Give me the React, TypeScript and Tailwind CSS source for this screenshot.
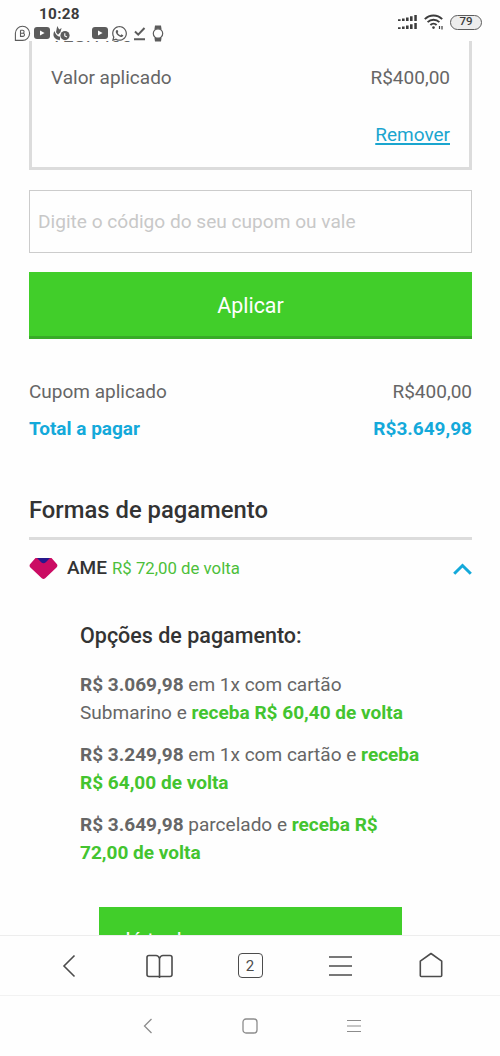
import { ReactNode } from "react";
import { FaWhatsapp } from "react-icons/fa";

const opcoes = [
  { valor: "R$ 3.069,98", texto: "em 1x com cartão Submarino e", volta: "receba R$ 60,40 de volta" },
  { valor: "R$ 3.249,98", texto: "em 1x com cartão e", volta: "receba R$ 64,00 de volta" },
  { valor: "R$ 3.649,98", texto: "parcelado e", volta: "receba R$ 72,00 de volta" },
];

function YoutubeIcon() {
  return (
    <svg width="16" height="12" viewBox="0 0 16 12" className="shrink-0">
      <rect width="16" height="12" rx="3" fill="#5c5c5c" />
      <path d="M6 3.4v5.2L10.6 6z" fill="#fff" />
    </svg>
  );
}

function StatusBar() {
  return (
    <header className="flex h-[41px] shrink-0 justify-between text-[#3c3c3c]">
      <div className="pl-[14px]">
        <p className="pt-[6px] pl-[25px] text-[15.3px] leading-[17px] font-bold tracking-[0.3px]">10:28</p>
        <div className="flex h-[20px] items-center text-[#5c5c5c]">
          <svg width="17" height="17" viewBox="0 0 17 17" fill="none" stroke="currentColor" className="shrink-0">
            <path d="M1.400 15.400V8.300a7.100 7.100 0 1 1 7.100 7.100z" strokeWidth="1.100" />
            <path d="M6.500 5.200v6.200h2.400a1.600 1.600 0 0 0 0-3.200H6.500M6.500 8.200h2.100a1.500 1.500 0 0 0 0-3H6.500" strokeWidth="1.100" />
          </svg>
          <div className="ml-[3px]"><YoutubeIcon /></div>
          <svg width="17" height="15" viewBox="0 0 17 15" fill="currentColor" className="ml-[3px] shrink-0">
            <path d="M4.200 0 6.200 3.400 8.600 2 7.400 6.200 5 8.800 3 6.200z" />
            <path d="M1.400 5C-.8 9.200.6 13.400 6.800 14.200l.4-3.400C4.200 10.400 2.600 8.600 1.400 5z" />
            <circle cx="12" cy="9.600" r="4.600" />
            <path d="M11.800 7.200v2.800l2.200 1" fill="none" stroke="#fff" strokeWidth="1.100" />
          </svg>
          <div className="ml-[22px]"><YoutubeIcon /></div>
          <FaWhatsapp className="ml-[3px] shrink-0" size={17} />
          <svg width="13" height="15" viewBox="0 0 13 15" fill="none" stroke="currentColor" strokeWidth="2" className="ml-[5px] shrink-0">
            <path d="M2 5.500 5.200 8.600 11.500 2M1 13.200h11" />
          </svg>
          <svg width="12" height="17" viewBox="0 0 12 17" className="ml-[6px] shrink-0">
            <path d="M3 .5h6l.6 4H2.400zM2.400 12.500h7.200l-.6 4H3z" fill="currentColor" />
            <circle cx="6" cy="8.500" r="4.700" fill="#fff" stroke="currentColor" strokeWidth="1.200" />
          </svg>
        </div>
      </div>
      <div className="flex h-[44px] items-center pr-[18px]">
        <svg width="20" height="16" viewBox="0 0 20 16" fill="#3c3c3c">
          <path d="M0 5.200h2.600V7H0zM4 4.600h2.600V7H4zM8 3.600h2.600V7H8zM12 2.200h2.600V7H12zM16.300 1h2.500v6h-2.500z" />
          <path d="M0 13.200h2.600V15H0zM4 12.600h2.600V15H4zM8 11.600h2.600V15H8zM12 10.200h2.600V15H12zM16.300 9h2.500v6h-2.500z" />
        </svg>
        <svg width="20" height="16" viewBox="0 0 20 16" fill="none" stroke="#3c3c3c" strokeWidth="1.900" className="ml-[6px]">
          <path d="M.8 5.200a12.200 12.200 0 0 1 17.400 0M3.600 8.200a8.300 8.300 0 0 1 11.800 0M6.400 11a4.400 4.400 0 0 1 6.200 0" />
          <circle cx="9.500" cy="13.600" r="1.300" fill="#3c3c3c" stroke="none" />
          <path d="M15.500 12v3M18 12v3.500" strokeWidth="1.200" />
        </svg>
        <span className="ml-[6px] flex h-[15px] w-[32px] items-center justify-center rounded-full border-[1.5px] border-[#5c5c5c] bg-[#ededed] text-[11.5px] leading-none font-medium">79</span>
      </div>
    </header>
  );
}

function Linha({ label, valor, className }: { label: string; valor: string; className?: string }) {
  return (
    <div className={`flex items-center justify-between ${className ?? ""}`}>
      <span>{label}</span>
      <span>{valor}</span>
    </div>
  );
}

function NavButton({ label, children }: { label: string; children: ReactNode }) {
  return (
    <button aria-label={label} className="flex flex-1 items-center justify-center">
      {children}
    </button>
  );
}

export default function App() {
  return (
    <div className="flex h-[1056px] w-[500px] flex-col overflow-hidden bg-[#fefefe] font-[Roboto,sans-serif] text-[19px] text-[#666]">
      <StatusBar />

      <main className="h-[894px] shrink-0 overflow-hidden px-[29px]">
        {/* Cupom atual */}
        <section className="h-[129px] w-[443px] border-x-[3px] border-b-[3px] border-[#dcdcdc] px-[19px]">
          <div className="flex h-[3px] items-end overflow-hidden">
            <p className="mb-[-3px] leading-[22px] tracking-[0.4px]">YESH400</p>
          </div>
          <Linha label="Valor aplicado" valor="R$400,00" className="h-[68px]" />
          <div className="flex h-[46px] items-center justify-end">
            <a href="#" className="text-[#1aa5cf] underline decoration-[1.5px] underline-offset-[2px]">Remover</a>
          </div>
        </section>

        <input
          placeholder="Digite o código do seu cupom ou vale"
          className="mt-[20px] block h-[63px] w-[443px] border-[1.5px] border-[#ccc] pl-[8px] text-[19.1px] placeholder:text-[#c8c8c8]"
        />
        <button className="mt-[19px] block h-[67px] w-[443px] border-b-[3px] border-[#38ab27] bg-[#41ce2a] pt-[5px] text-[21.4px] text-white">Aplicar</button>

        {/* Totais */}
        <section className="mt-[34px] w-[443px]">
          <Linha label="Cupom aplicado" valor="R$400,00" className="h-[38px]" />
          <Linha label="Total a pagar" valor="R$3.649,98" className="h-[37px] font-bold text-[#14a9da]" />
        </section>

        {/* Formas de pagamento */}
        <section className="mt-[43px] w-[443px]">
          <h2 className="flex h-[49px] items-center border-b-[3px] border-[#dcdcdc] pb-[6px] text-[23.8px] font-medium text-[#333]">Formas de pagamento</h2>
          <div className="flex h-[57px] items-center">
            <svg width="29" height="21" viewBox="0 0 29 21">
              <path d="M6.500 0h16L28 6.200Q29 8 27.500 9.400L16.200 20.200q-1.700 1.400-3.400 0L1.400 9.400Q0 8 1 6.200z" fill="#cb0c63" />
              <path d="M8 0h13l-4.200 4.200q-2.300 2-4.600 0z" fill="#26188c" />
            </svg>
            <span className="ml-[9px] text-[19px] font-medium text-[#333]">AME</span>
            <span className="ml-[5px] text-[16.8px] text-[#4cbf3a]">R$ 72,00 de volta</span>
            <svg width="19" height="12" viewBox="0 0 19 12" fill="none" stroke="#14a9da" strokeWidth="3" className="ml-auto">
              <path d="M1.200 10.800 9.500 2.500 17.800 10.800" />
            </svg>
          </div>

          <div className="pt-[24px] pl-[51px]">
            <h3 className="text-[21.5px] leading-[30px] font-medium text-[#333]">Opções de pagamento:</h3>
            <div className="mt-[20px] flex w-[350px] flex-col gap-[14px] text-[19.05px] leading-[28px]">
              {opcoes.map(o => (
                <p key={o.valor}>
                  <strong>{o.valor}</strong> {o.texto} <strong className="text-[#43c42f]">{o.volta}</strong>
                </p>
              ))}
            </div>
            <button className="mt-[40px] ml-[19px] block h-[68px] w-[303px] bg-[#41ce2a] pl-[20px] text-left text-[21px] text-white">Já tenho o app</button>
          </div>
        </section>
      </main>

      {/* Barra do navegador */}
      <nav className="flex h-[60px] shrink-0 border-t border-[#ededed] px-[24px] text-[#4c4c4c]">
        <NavButton label="Voltar">
          <svg width="14" height="24" viewBox="0 0 14 24" fill="none" stroke="currentColor" strokeWidth="1.600">
            <path d="M12.500 1.500 2 12l10.500 10.500" />
          </svg>
        </NavButton>
        <NavButton label="Favoritos">
          <svg width="27" height="24" viewBox="0 0 27 24" fill="none" stroke="currentColor" strokeWidth="1.600">
            <path d="M13.500 4.500Q12.500 1.500 10 1.500H3Q1 1.500 1 3.500v17q0 2 2 2h21q2 0 2-2v-17q0-2-2-2h-7q-2.500 0-3.500 3v19.500" />
          </svg>
        </NavButton>
        <NavButton label="Abas">
          <span className="flex size-[25px] items-center justify-center rounded-[4px] border-[1.600px] border-current pt-[2px] text-[15px] leading-none">2</span>
        </NavButton>
        <NavButton label="Menu">
          <svg width="23" height="20" viewBox="0 0 23 20" stroke="currentColor" strokeWidth="1.600">
            <path d="M0 1h23M0 10h23M0 19h23" />
          </svg>
        </NavButton>
        <NavButton label="Início">
          <svg width="24" height="26" viewBox="0 0 24 26" fill="none" stroke="currentColor" strokeWidth="1.600" strokeLinejoin="round" className="-mt-[1px]">
            <path d="M12 1.500 22.700 9.200v14.300q0 1-1 1H2.300q-1 0-1-1V9.200z" />
          </svg>
        </NavButton>
      </nav>

      {/* Botões do sistema */}
      <footer className="flex h-[61px] shrink-0 items-center justify-center gap-[89px] border-t border-[#f2f2f2] pl-[4px] text-[#8c8c8c]">
        <svg width="10" height="16" viewBox="0 0 10 16" fill="none" stroke="currentColor" strokeWidth="1.300">
          <path d="M8.500 1 1.500 8l7 7" />
        </svg>
        <svg width="16" height="16" viewBox="0 0 16 16" fill="none" stroke="currentColor" strokeWidth="1.300">
          <rect x="1" y="1" width="14" height="14" rx="3" />
        </svg>
        <svg width="14" height="14" viewBox="0 0 14 14" stroke="currentColor" strokeWidth="1.200">
          <path d="M0 1.500h14M0 7h14M0 12.500h14" />
        </svg>
      </footer>
    </div>
  );
}
